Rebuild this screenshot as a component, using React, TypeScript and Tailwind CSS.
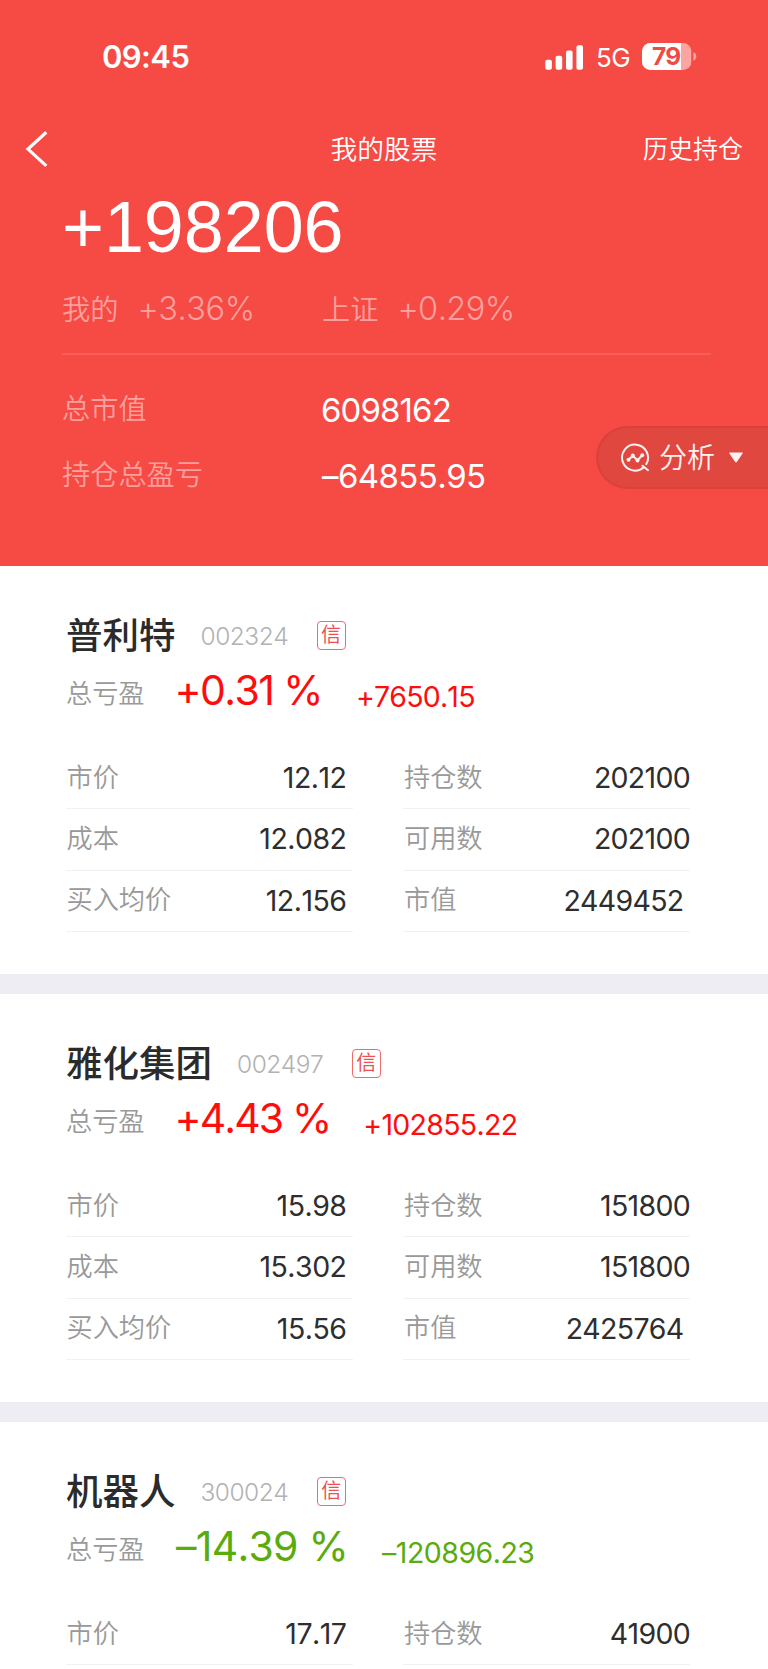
import React from "react";

type Stock = {
  name: string;
  code: string;
  percent: string;
  amount: string;
  percentClass: string;
  amountClass: string;
  left: [string, string][];
  right: [string, string][];
};

const stocks: Stock[] = [
  {
    name: "普利特",
    code: "002324",
    percent: "+0.31 %",
    amount: "+7650.15",
    percentClass: "ml-[30px] tracking-[-1.600px] text-[#ff0d0d]",
    amountClass: "ml-[34px] tracking-[-0.800px] text-[#ff0d0d]",
    left: [["市价", "12.12"], ["成本", "12.082"], ["买入均价", "12.156"]],
    right: [["持仓数", "202100"], ["可用数", "202100"], ["市值", "2449452"]],
  },
  {
    name: "雅化集团",
    code: "002497",
    percent: "+4.43 %",
    amount: "+102855.22",
    percentClass: "ml-[30px] tracking-[-1.900px] text-[#ff0d0d]",
    amountClass: "ml-[33px] tracking-[-0.700px] text-[#ff0d0d]",
    left: [["市价", "15.98"], ["成本", "15.302"], ["买入均价", "15.56"]],
    right: [["持仓数", "151800"], ["可用数", "151800"], ["市值", "2425764"]],
  },
  {
    name: "机器人",
    code: "300024",
    percent: "–14.39 %",
    amount: "–120896.23",
    percentClass: "ml-[31.500px] tracking-[-0.750px] text-[#5aab0b]",
    amountClass: "ml-[34px] tracking-[-0.500px] text-[#5aab0b]",
    left: [["市价", "17.17"]],
    right: [["持仓数", "41900"]],
  },
];

function StatusBar() {
  return (
    <div className="flex h-[115px] items-center pl-[102px] pr-[71px]">
      <span className="text-[31px] font-semibold tracking-[-0.6px]">09:45</span>
      <div className="ml-auto flex items-center">
        <svg width="39" height="26" viewBox="0 0 39 26" fill="currentColor">
          <rect x="0.3" y="14.800" width="6.6" height="10" rx="2" />
          <rect x="10.6" y="10.800" width="6.6" height="14" rx="2" />
          <rect x="21" y="5.600" width="6.6" height="19.2" rx="2" />
          <rect x="31.4" y="0.300" width="6.6" height="24.5" rx="2" />
        </svg>
        <span className="ml-[12px] w-[46px] pt-px text-[26px] leading-[30px] tracking-[-0.6px]">5G</span>
        <div className="relative -top-px h-[27px] w-[55px]">
          <svg width="55" height="27" viewBox="0 0 55 27">
            <defs>
              <clipPath id="battery">
                <rect x="0" y="0" width="49.5" height="27" rx="8.5" />
              </clipPath>
            </defs>
            <g clipPath="url(#battery)">
              <rect width="49.5" height="27" fill="#fba4a2" />
              <rect width="39" height="27" fill="#fff" />
            </g>
            <path d="M51.3 9.3c2 .6 3 2.2 3 4.2s-1 3.600-3 4.200z" fill="#fba4a2" />
          </svg>
          <span className="absolute left-[10px] top-0 text-[24.500px] font-bold leading-[27px] tracking-[-1px] text-[#f04a45]">79</span>
        </div>
      </div>
    </div>
  );
}

function Cells({ rows, rightColumn }: { rows: [string, string][]; rightColumn?: boolean }) {
  return (
    <div className="w-[287px]">
      {rows.map(([label, value]) => (
        <div key={label} className="flex h-[61.4px] items-center justify-between border-b border-[#f1f1f2] text-[26.200px] text-[#999]">
          <span className={"relative -top-px font-[350] " + (rightColumn ? "pl-px" : "pl-[0.500px]")}>{label}</span>
          <span className={"text-[28.5px] font-[370] text-[#2e2e2e] " + (rightColumn ? "tracking-[-0.7px] " : "tracking-[-0.500px] ") + (!rightColumn || label === "市值" ? "pr-[6.500px]" : "")}>{value}</span>
        </div>
      ))}
    </div>
  );
}

function StockCard({ stock }: { stock: Stock }) {
  return (
    <section className="h-[428px] shrink-0 border-b-[20.5px] border-[#eeedf3] bg-white pl-[66px] pr-[78px]">
      <div className="flex h-[96px] items-end">
        <h2 className="text-[36.5px] font-medium leading-[52px] text-[#2b2b2b]">{stock.name}</h2>
        <span className="ml-[25px] text-[24.5px] font-light leading-[52px] tracking-[-0.5px] text-[#b2b2b2]">{stock.code}</span>
        <span className="mb-[12.500px] ml-[28.500px] flex h-[29px] w-[29px] items-center justify-center rounded-[4px] border-[1.500px] border-[#f06a6a] text-[20px] leading-none text-[#ea5252]">信</span>
      </div>
      <div className="flex h-[86px] items-baseline">
        <span className="relative -top-[2px] text-[26.200px] font-[350] leading-[54px] text-[#999]">总亏盈</span>
        <span className={"text-[41px] font-[380] leading-[56px] " + stock.percentClass}>{stock.percent}</span>
        <span className={"relative top-[2px] text-[28.5px] font-[380] leading-[54px] " + stock.amountClass}>{stock.amount}</span>
      </div>
      <div className="flex justify-between">
        <Cells rows={stock.left} />
        <Cells rows={stock.right} rightColumn />
      </div>
    </section>
  );
}

export default function App() {
  return (
    <main className="flex h-[1669px] w-[768px] flex-col overflow-hidden bg-white font-['Inter','Noto_Sans_CJK_SC',sans-serif] [font-kerning:none]">
      <header className="relative h-[566px] shrink-0 bg-[#f64a45] text-white">
        <StatusBar />
        <nav className="grid h-[70px] grid-cols-3 items-center pl-[25px] pr-[25px]">
          <svg width="26" height="38" viewBox="0 0 26 38" fill="none" stroke="currentColor" strokeWidth="3.200">
            <path d="M21.300 1.300L3 18.100l18.300 16.800" />
          </svg>
          <h1 className="-mt-px text-center text-[26.7px] font-[350]">我的股票</h1>
          <span className="text-right text-[25px] font-[350]">历史持仓</span>
        </nav>
        <div className="pl-[62px] pr-[57px]">
          <div className="h-[95px] font-['Liberation_Sans',sans-serif] text-[71.800px] leading-[84px]">+198206</div>
          <div className="flex h-[75px] items-start border-b-2 border-[#f75d59] text-[28.200px] font-[350] leading-[58px] text-[#fba09d]">
            <div className="flex w-[260px] items-baseline">
              <span>我的</span>
              <span className="ml-[19px] text-[32.500px] font-[330] tracking-[-0.400px]">+3.36%</span>
            </div>
            <div className="flex items-baseline">
              <span>上证</span>
              <span className="ml-[19px] text-[32.500px] font-[330] tracking-[-0.500px]">+0.29%</span>
            </div>
          </div>
          <div className="flex h-[88px] items-end text-[28.200px] font-[350] text-[#fba09d]">
            <span className="w-[259px] pb-px leading-[66px]">总市值</span>
            <span className="text-[33px] font-[370] leading-[66px] tracking-[-0.900px] text-white">6098162</span>
          </div>
          <div className="flex h-[66px] items-end text-[28.200px] font-[350] text-[#fba09d]">
            <span className="w-[260px] pb-px leading-[66px]">持仓总盈亏</span>
            <span className="text-[33px] font-[370] leading-[66px] tracking-[-0.600px] text-white">–64855.95</span>
          </div>
        </div>
        <button className="absolute right-0 top-[426px] flex h-[63px] w-[172px] items-center rounded-l-full border-2 border-r-0 border-[#db403d] bg-[#df473f] pl-[23px] text-[28px] text-[#fff1f0]">
          <svg width="29" height="29" viewBox="0 0 29 29" fill="none" stroke="currentColor" strokeWidth="2" strokeLinecap="round" strokeLinejoin="round">
            <path d="M22.800 24.200A13 13 0 1 1 25.300 21.100M21.500 22.800l5.500 4.400" />
            <path d="M7.500 16.800l4.300-4 4.700 4.400 4.500-4.700" />
            <g fill="currentColor" stroke="none">
              <circle cx="7.500" cy="16.800" r="2" />
              <circle cx="11.800" cy="12.500" r="2" />
              <circle cx="16.500" cy="17.500" r="2" />
              <circle cx="21.200" cy="12.300" r="2" />
            </g>
          </svg>
          <span className="ml-[9px] font-[350]">分析</span>
          <svg className="ml-[14px]" width="14" height="11" viewBox="0 0 14 11" fill="currentColor">
            <path d="M1 .5h12c.8 0 1 .5.6 1.100L8 9.800c-.6.900-1.400.900-2 0L.4 1.600C0 1 .2.5 1 .5z" />
          </svg>
        </button>
      </header>
      {stocks.map((stock) => (
        <StockCard key={stock.code} stock={stock} />
      ))}
    </main>
  );
}
